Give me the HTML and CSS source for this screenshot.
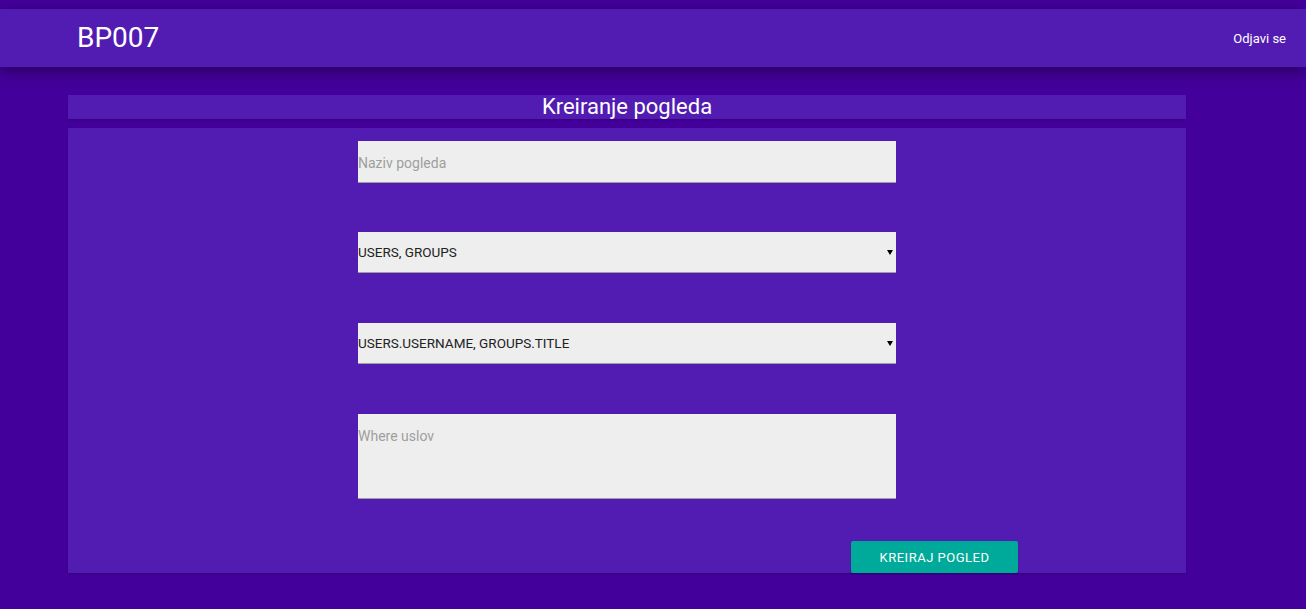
FILE: index.html
```html
<!DOCTYPE html>
<html lang="sr">
<head>
<meta charset="utf-8">
<title>BP007</title>
<link rel="stylesheet" href="styles.css">
</head>
<body>
<div class="page">
  <header class="topbar">
    <div class="brand">BP007</div>
    <a class="logout" href="#">Odjavi se</a>
  </header>
  <main class="content">
    <h1 class="title">Kreiranje pogleda</h1>
    <section class="card">
      <form class="form">
        <input class="field" type="text" placeholder="Naziv pogleda">
        <div class="select-wrap gap1">
          <select class="field select"><option>USERS, GROUPS</option></select>
        </div>
        <div class="select-wrap gap2">
          <select class="field select"><option>USERS.USERNAME, GROUPS.TITLE</option></select>
        </div>
        <textarea class="field area" placeholder="Where uslov"></textarea>
      </form>
      <div class="actions">
        <button class="btn" type="button">Kreiraj pogled</button>
      </div>
    </section>
  </main>
</div>
</body>
</html>
```
FILE: styles.css
```css
* { box-sizing: border-box; }
html, body { margin: 0; padding: 0; }
body {
  background: #43009b;
  font-family: Roboto, "Liberation Sans", Arial, sans-serif;
  color: #fff;
  height: 609px;
  overflow: hidden;
}
.page { padding-top: 9px; }
.topbar {
  height: 58px;
  background: #521cb3;
  display: flex;
  align-items: center;
  justify-content: space-between;
  padding: 0 20px 0 77px;
  box-shadow: 0 4px 14px rgba(0, 0, 0, 0.4);
  position: relative;
  z-index: 1;
}
.brand { font-size: 28px; line-height: 32px; }
.logout {
  color: #fff;
  text-decoration: none;
  font-size: 13px;
}
.content {
  margin: 28px 0 0 68px;
  width: 1118px;
}
.title {
  margin: 0;
  height: 24px;
  line-height: 24px;
  font-size: 22px;
  font-weight: 400;
  text-align: center;
  background: #521cb3;
  box-shadow: 0 1px 2px rgba(0, 0, 0, 0.2);
}
.card {
  margin-top: 9px;
  height: 445px;
  background: #521cb3;
  padding-top: 13px;
  display: flex;
  flex-direction: column;
  box-shadow: 0 1px 2px rgba(0, 0, 0, 0.2);
}
.form {
  width: 538px;
  margin: 0 auto;
  display: flex;
  flex-direction: column;
}
.field {
  display: block;
  width: 538px;
  border: none;
  border-bottom: 1px solid #9e9e9e;
  border-radius: 0;
  background: #eeeeee;
  font-family: Roboto, "Liberation Sans", Arial, sans-serif;
  outline: none;
  padding: 0;
  margin: 0;
}
input.field {
  height: 42px;
  padding-top: 2px;
  font-size: 14px;
  color: #333;
}
.field::placeholder { color: #9e9e9e; opacity: 1; }
.select-wrap { position: relative; }
.select-wrap::after {
  content: "";
  position: absolute;
  right: 3px;
  top: 18px;
  border-left: 3px solid transparent;
  border-right: 3px solid transparent;
  border-top: 5px solid #000;
}
.gap1 { margin-top: 49px; }
.gap2 { margin-top: 50px; }
.select {
  -webkit-appearance: none;
  appearance: none;
  height: 41px;
  font-size: 13.5px;
  color: #222;
}
.area {
  margin-top: 50px;
  height: 85px;
  resize: none;
  font-size: 14px;
  line-height: 20px;
  padding: 12px 0 0;
  color: #333;
}
.actions {
  margin-top: auto;
  display: flex;
  justify-content: flex-end;
  padding-right: 168px;
}
.btn {
  width: 167px;
  height: 32px;
  border: none;
  border-radius: 2px;
  background: #00aa9a;
  color: #fff;
  font-family: Roboto, "Liberation Sans", Arial, sans-serif;
  font-size: 13px;
  letter-spacing: 0.5px;
  text-transform: uppercase;
  box-shadow: 0 1px 2px rgba(0, 0, 0, 0.2);
}
```
